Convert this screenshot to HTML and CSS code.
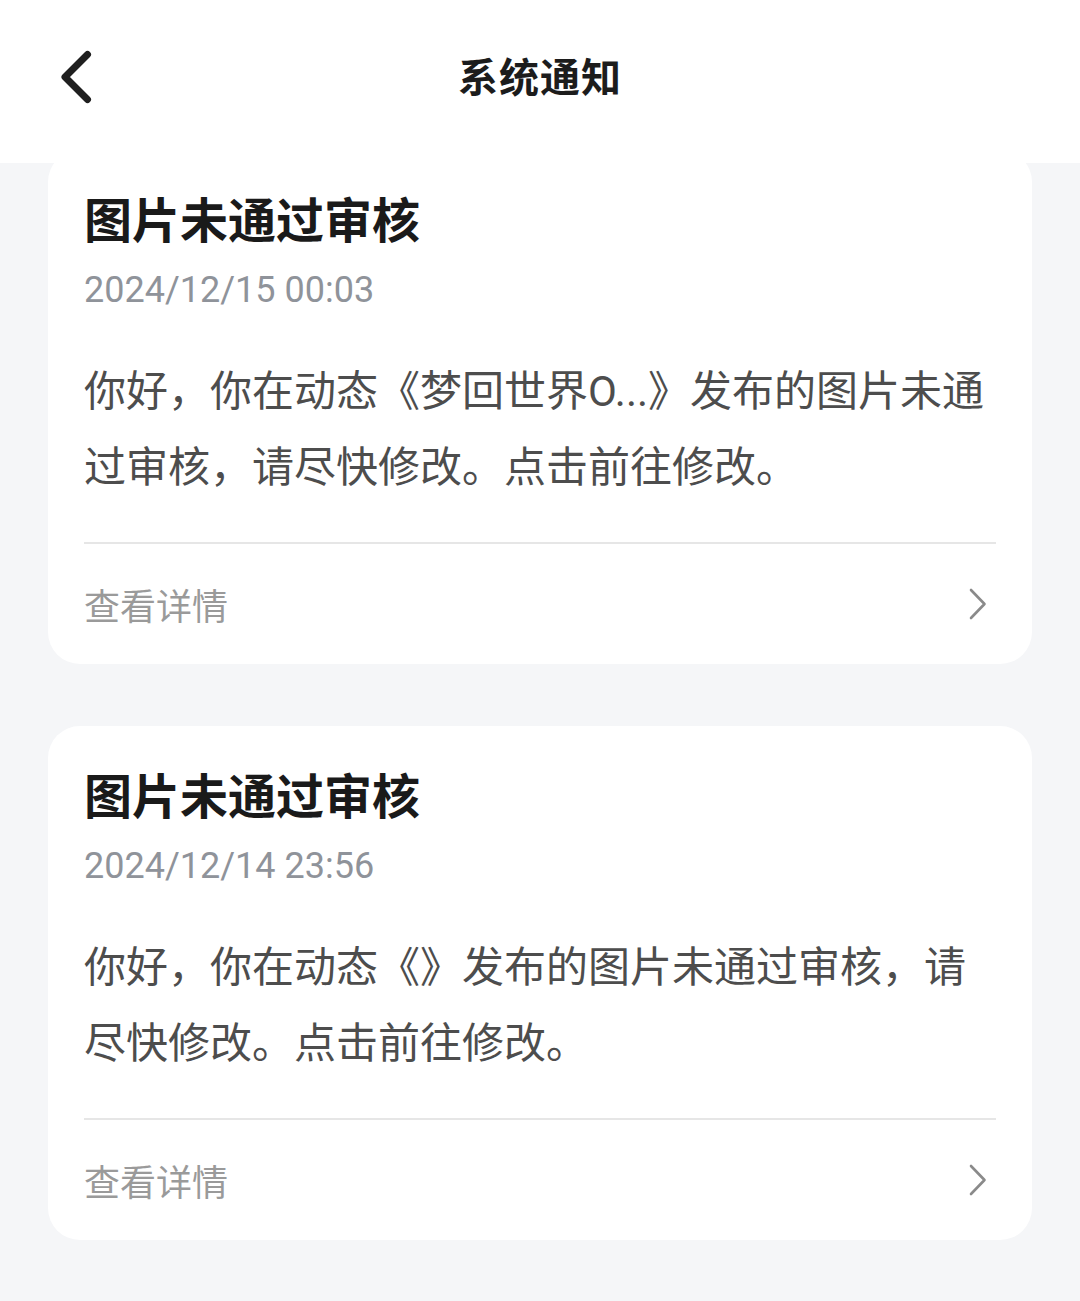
FILE: index.html
```html
<!DOCTYPE html>
<html lang="zh-CN">
<head>
<meta charset="utf-8">
<title>系统通知</title>
<link rel="stylesheet" href="styles.css">
</head>
<body>
<header class="topbar">
  <div class="topbar-left">
    <svg class="back-icon" width="36" height="58" viewBox="0 0 36 58" aria-hidden="true">
      <path d="M28.5 6.5 L6 29 L28.5 51.5" fill="none" stroke="#1f1f1f" stroke-width="7" stroke-linecap="round" stroke-linejoin="round"/>
    </svg>
  </div>
  <h1 class="topbar-title">系统通知</h1>
  <div class="topbar-right"></div>
</header>
<main class="list">
  <article class="card card-first">
    <h2 class="card-title">图片未通过审核</h2>
    <div class="card-date">2024/12/15 00:03</div>
    <p class="card-body">你好，你在动态《梦回世界O...》发布的图片未通过审核，请尽快修改。点击前往修改。</p>
    <div class="card-divider"></div>
    <div class="card-footer">
      <span class="card-link">查看详情</span>
      <svg class="chevron" width="22" height="34" viewBox="0 0 22 34" aria-hidden="true">
        <path d="M4 3 L17.5 17 L4 31" fill="none" stroke="#8a8a8a" stroke-width="2.6" stroke-linecap="round" stroke-linejoin="round"/>
      </svg>
    </div>
  </article>
  <article class="card">
    <h2 class="card-title">图片未通过审核</h2>
    <div class="card-date">2024/12/14 23:56</div>
    <p class="card-body">你好，你在动态《》发布的图片未通过审核，请尽快修改。点击前往修改。</p>
    <div class="card-divider"></div>
    <div class="card-footer">
      <span class="card-link">查看详情</span>
      <svg class="chevron" width="22" height="34" viewBox="0 0 22 34" aria-hidden="true">
        <path d="M4 3 L17.5 17 L4 31" fill="none" stroke="#8a8a8a" stroke-width="2.6" stroke-linecap="round" stroke-linejoin="round"/>
      </svg>
    </div>
  </article>
</main>
</body>
</html>
```
FILE: styles.css
```css
* {
  box-sizing: border-box;
}

html, body {
  margin: 0;
  padding: 0;
}

body {
  width: 1080px;
  height: 1301px;
  overflow: hidden;
  background: #f5f6f8;
  font-family: Roboto, "Noto Sans CJK SC", sans-serif;
  display: flex;
  flex-direction: column;
}

.topbar {
  flex: 0 0 163px;
  height: 163px;
  padding-bottom: 14px;
  background: #ffffff;
  display: grid;
  grid-template-columns: 1fr auto 1fr;
  align-items: center;
  position: relative;
  z-index: 2;
}

.topbar-left {
  display: flex;
  align-items: center;
  padding-left: 59px;
  padding-top: 4px;
}

.back-icon {
  display: block;
}

.topbar-title {
  margin: 0;
  font-family: "Noto Sans CJK SC", sans-serif;
  font-size: 40px;
  font-weight: 700;
  color: #1c1c1c;
  letter-spacing: 1px;
}

.list {
  flex: 1 1 auto;
  overflow: hidden;
  display: flex;
  flex-direction: column;
  gap: 62px;
  padding: 0 48px;
}

.card {
  flex: 0 0 auto;
  background: #ffffff;
  border-radius: 32px;
  padding: 35px 36px 0;
}

.card-first {
  margin-top: -13px;
}

.card-title {
  margin: 0;
  font-family: "Noto Sans CJK SC", sans-serif;
  font-size: 48px;
  line-height: 64px;
  font-weight: 700;
  color: #1a1a1a;
}

.card-date {
  margin-top: 19px;
  font-size: 36px;
  line-height: 44px;
  color: #8f939a;
}

.card-body {
  margin: 42px 0 0;
  font-size: 42px;
  line-height: 76px;
  color: #4d4d4d;
}

.card-divider {
  margin-top: 36px;
  height: 2px;
  background: #e6e6e6;
}

.card-footer {
  height: 120px;
  display: flex;
  align-items: center;
  justify-content: space-between;
  padding-right: 7px;
}

.card-link {
  font-family: "Noto Sans CJK SC", sans-serif;
  font-size: 36px;
  color: #9a9a9a;
}

.chevron {
  display: block;
}
```
